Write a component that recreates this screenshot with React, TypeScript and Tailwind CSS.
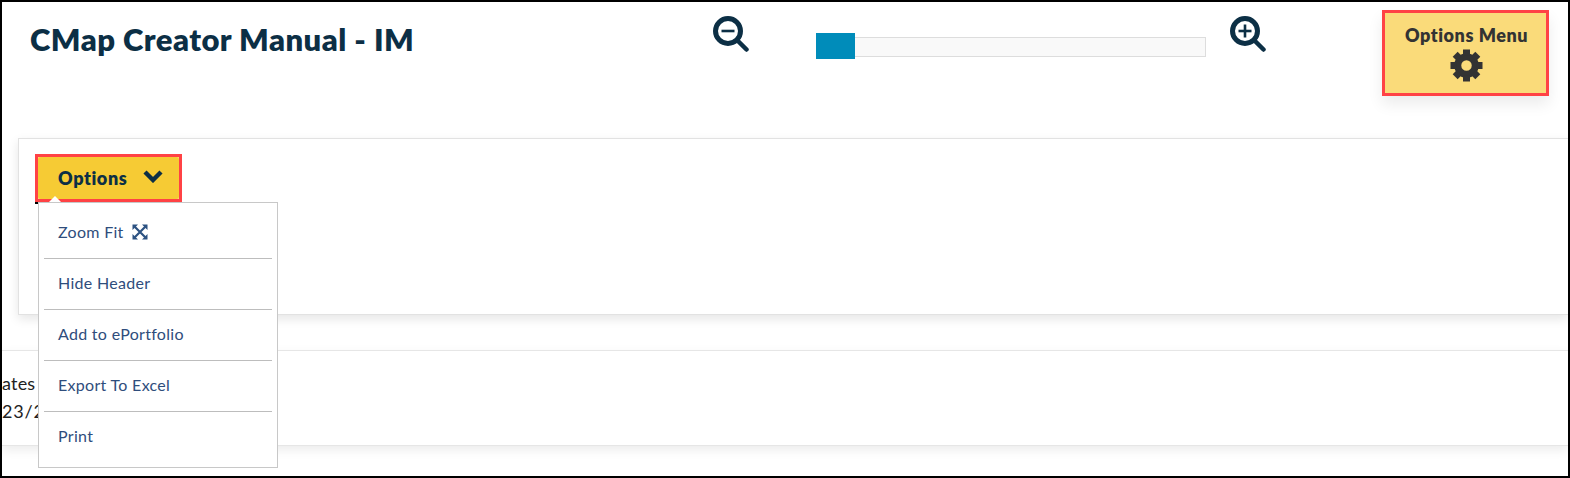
import React from "react";

function Magnifier({ plus }: { plus?: boolean }) {
  return (
    <svg viewBox="0 0 36 36" className="w-9 h-9 block" fill="none" stroke="#0c2f45" strokeLinecap="round">
      <circle cx="15" cy="15" r="12.5" strokeWidth="5" />
      <path d="M24.5 24.5 L33.5 33.5" strokeWidth="4.5" />
      <path d="M8.5 15 H21.5" strokeWidth="2.6" strokeLinecap="butt" />
      {plus && <path d="M15 8.5 V21.5" strokeWidth="2.6" strokeLinecap="butt" />}
    </svg>
  );
}

function ExpandIcon() {
  return (
    <svg viewBox="0 0 16 16" className="w-[16px] h-[16px] block" fill="#2c5282" stroke="none">
      <path d="M0.5 0.5h5.5L0.5 6zM15.5 0.5v5.5L10 0.5zM15.5 15.5h-5.5L15.5 10zM0.5 15.5V10L6 15.5z" />
      <path d="M2.5 2.5 L13.5 13.5 M13.5 2.5 L2.5 13.5" fill="none" stroke="#2c5282" strokeWidth="2.2" />
    </svg>
  );
}

function Gear() {
  const angles = [0, 45, 90, 135, 180, 225, 270, 315];
  return (
    <svg viewBox="0 0 33 33" className="w-[33px] h-[33px] block mt-[2px]" fill="#333333">
      <circle cx="16.5" cy="16.5" r="8.75" fill="none" stroke="#333333" strokeWidth="7" />
      {angles.map((a) => (
        <rect key={a} x="13" y="0.5" width="7" height="6" transform={`rotate(${a} 16.5 16.5)`} />
      ))}
    </svg>
  );
}

function MenuItem({ label, last, icon }: { label: string; last?: boolean; icon?: React.ReactNode }) {
  return (
    <div
      className={`mx-[5px] h-[51px] flex items-center gap-[8px] pl-[14px] text-[16px] tracking-[0.3px] text-[#2f4d7c] ${
        last ? "pb-[3px]" : "pb-[2px] border-b border-[#bdbdbd]"
      }`}
    >
      <span>{label}</span>
      {icon}
    </div>
  );
}

export default function App() {
  return (
    <div className="w-[1570px] h-[478px] bg-white border-2 border-black overflow-hidden relative font-['Lato','Liberation_Sans',sans-serif]">
      <header className="h-[136px] flex items-start relative">
        <h1 className="ml-[28px] mt-[17px] w-[681px] text-[31px] leading-[40px] font-[800] text-[#0c2f45] tracking-[0.45px] whitespace-nowrap">
          CMap Creator Manual - IM
        </h1>
        <div className="mt-[14px] ml-[2px]">
          <Magnifier />
        </div>
        <div className="ml-[67px] mt-[35px] w-[390px] h-[20px] bg-[#f9f9f9] border border-[#dddddd] relative">
          <div className="absolute left-[-1px] top-[-5px] w-[39px] h-[26px] bg-[#008cba]" />
        </div>
        <div className="mt-[14px] ml-[24px]">
          <Magnifier plus />
        </div>
        <div className="ml-[116px] mt-[8px] w-[167px] h-[86px] bg-[#fadb7a] border-[3px] border-[#ff4245] shadow-[0_8px_14px_rgba(0,0,0,0.08)] flex flex-col items-center pt-[10px] pl-[2px] text-[18px] leading-[24px] font-[800] tracking-[0.55px] text-[#333333]">
          <span className="whitespace-nowrap">Options Menu</span>
          <Gear />
        </div>
      </header>

      <section className="ml-[16px] h-[177px] border border-r-0 border-[#e2e2e2] shadow-[0_4px_10px_rgba(0,0,0,0.1)] pt-[15px] pl-[16px]">
        <div className="relative w-[147px]">
          <div className="h-[48px] border-[3px] border-[#ff4245] bg-[#f8d77a]">
            <div className="h-full rounded-[3px] bg-[#f6cb34] flex items-center pl-[20px] text-[18px] font-[800] tracking-[0.6px] text-[#0c2f45]">
              <span>Options</span>
              <svg viewBox="0 0 20 14" className="ml-[16px] -mt-[5px] w-[20px] h-[14px] block" fill="none" stroke="#0c2f45" strokeWidth="4.4">
                <path d="M2 3 L10 11 L18 3" />
              </svg>
            </div>
            <div className="absolute left-[14px] top-[42px] w-0 h-0 border-x-[6px] border-x-transparent border-b-[6px] border-b-white" />
          </div>
          <div className="absolute left-0 top-[48px] w-[3px] h-[2px] bg-black" />
          <div className="absolute left-[3px] top-[48px] z-10 w-[240px] h-[266px] bg-white border border-[#c8c8c8] pt-[5px]">
            <MenuItem label="Zoom Fit" icon={<ExpandIcon />} />
            <MenuItem label="Hide Header" />
            <MenuItem label="Add to ePortfolio" />
            <MenuItem label="Export To Excel" />
            <MenuItem label="Print" last />
          </div>
        </div>
      </section>

      <section className="mt-[35px] h-[96px] border-t border-b border-[#e6e6e6] shadow-[0_4px_10px_rgba(0,0,0,0.08)] text-[18px] leading-[28px] tracking-[0.2px] text-[#222222] pt-[18px] whitespace-nowrap">
        <div>ates</div>
        <div className="tracking-[0.8px]">23/2024</div>
      </section>
    </div>
  );
}
